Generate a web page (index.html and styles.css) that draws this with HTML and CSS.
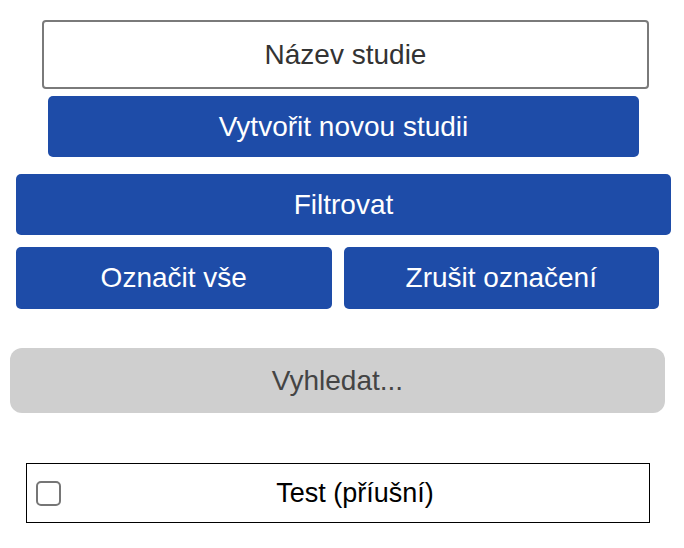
FILE: index.html
```html
<!DOCTYPE html>
<html lang="cs">
<head>
<meta charset="utf-8">
<title>Studie</title>
<link rel="stylesheet" href="styles.css">
</head>
<body>
<div class="page">
  <input class="name-input" type="text" placeholder="Název studie">
  <button class="btn btn-create">Vytvořit novou studii</button>
  <button class="btn btn-filter">Filtrovat</button>
  <div class="btn-row">
    <button class="btn btn-half">Označit vše</button>
    <button class="btn btn-half">Zrušit označení</button>
  </div>
  <div class="search">Vyhledat...</div>
  <label class="item">
    <span class="checkbox"></span>
    <span class="item-text">Test (příušní)</span>
  </label>
</div>
</body>
</html>
```
FILE: styles.css
```css
html, body {
  margin: 0;
  padding: 0;
  background: #ffffff;
}
body {
  font-family: "Liberation Sans", Arial, sans-serif;
}
.page {
  display: flex;
  flex-direction: column;
  align-items: flex-start;
  padding-top: 20px;
}
.name-input {
  box-sizing: border-box;
  margin-left: 42px;
  width: 607px;
  height: 69px;
  border: 2px solid #7a7a7a;
  border-radius: 4px;
  background: #fff;
  font-family: inherit;
  font-size: 28px;
  color: #333;
  text-align: center;
  padding: 0;
  outline: none;
}
.name-input::placeholder {
  color: #333;
  opacity: 1;
}
.btn {
  box-sizing: border-box;
  border: none;
  background: #1e4ca8;
  color: #fff;
  font-family: inherit;
  font-size: 28px;
  height: 61px;
  border-radius: 5px;
  padding: 0;
  display: flex;
  align-items: center;
  justify-content: center;
}
.btn-create {
  margin-left: 48px;
  margin-top: 7px;
  width: 591px;
}
.btn-filter {
  margin-left: 16px;
  margin-top: 17px;
  width: 655px;
}
.btn-row {
  display: flex;
  gap: 12px;
  margin-left: 16px;
  margin-top: 12px;
  width: 643px;
}
.btn-half {
  flex: 1;
  height: 62px;
}
.search {
  box-sizing: border-box;
  margin-left: 10px;
  margin-top: 39px;
  width: 655px;
  height: 65px;
  border-radius: 12px;
  background: #cfcfcf;
  color: #444;
  font-size: 28px;
  display: flex;
  align-items: center;
  justify-content: center;
}
.item {
  box-sizing: border-box;
  margin-left: 26px;
  margin-top: 50px;
  width: 624px;
  height: 60px;
  border: 1px solid #000;
  display: flex;
  align-items: center;
  padding-left: 9px;
}
.checkbox {
  box-sizing: border-box;
  width: 25px;
  height: 25px;
  border: 2px solid #767676;
  border-radius: 5px;
  flex: none;
}
.item-text {
  flex: 1;
  text-align: center;
  font-size: 27px;
  color: #000;
}
```
